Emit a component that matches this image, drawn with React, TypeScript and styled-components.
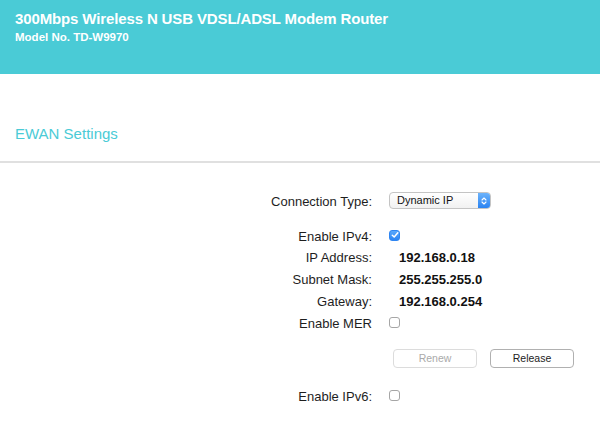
import React from "react";
import styled, { createGlobalStyle } from "styled-components";

const Global = createGlobalStyle`
  html, body { margin: 0; padding: 0; background: #fff; }
  body { font-family: "Liberation Sans", Arial, Helvetica, sans-serif; color: #222; }
`;

const Page = styled.div`
  width: 600px;
  height: 422px;
  overflow: hidden;
  background: #fff;
`;

const Header = styled.header`
  height: 74px;
  box-sizing: border-box;
  padding: 10px 15px 0;
  background: #4acbd6;
  color: #fff;
`;

const Title = styled.div`
  font-size: 15px;
  line-height: 18px;
  font-weight: bold;
  letter-spacing: -0.13px;
`;

const Model = styled.div`
  margin-top: 2px;
  font-size: 11.5px;
  line-height: 14px;
  font-weight: bold;
`;

const SectionHead = styled.div`
  padding: 51px 15px 18px;
  border-bottom: 2px solid #e0e0e0;
  font-size: 15px;
  line-height: 18px;
  color: #4acbd6;
`;

const Form = styled.div`
  margin-top: 28px;
  display: flex;
  flex-direction: column;
`;

const Row = styled.div<{ $mt?: number }>`
  display: grid;
  grid-template-columns: 372px 1fr;
  column-gap: 17px;
  align-items: center;
  height: 21px;
  margin-top: ${(p) => p.$mt ?? 0}px;
`;

const Label = styled.div`
  text-align: right;
  font-size: 13px;
  line-height: 21px;
  color: #1e1e1e;
  white-space: nowrap;
`;

const Value = styled.div`
  padding-left: 10px;
  font-size: 13px;
  line-height: 21px;
  font-weight: bold;
  color: #111;
`;

const Select = styled.div`
  align-self: start;
  margin-top: 1px;
  width: 102px;
  height: 17px;
  box-sizing: border-box;
  display: flex;
  border: 1px solid #c4c4c4;
  border-radius: 4px;
  background: linear-gradient(#ffffff, #f1f1f1);
  overflow: hidden;
`;

const SelectText = styled.span`
  flex: 1;
  padding-left: 7px;
  font-size: 11px;
  line-height: 15px;
  color: #111;
`;

const Stepper = styled.span`
  width: 12px;
  display: flex;
  align-items: center;
  justify-content: center;
  background: linear-gradient(#6cb3fb, #2a83f2);
`;

const Check = styled.span<{ $on?: boolean }>`
  width: 11px;
  height: 11px;
  box-sizing: border-box;
  margin-bottom: 3px;
  border-radius: 3px;
  display: flex;
  align-items: center;
  justify-content: center;
  border: 1px solid ${(p) => (p.$on ? "#2f86f2" : "#a6a6a6")};
  background: ${(p) => (p.$on ? "linear-gradient(#5aa8fb, #2b84f3)" : "#fff")};
`;

const Buttons = styled.div`
  display: flex;
  gap: 13px;
  padding-left: 4px;
`;

const Button = styled.button<{ $disabled?: boolean }>`
  width: 84px;
  height: 19px;
  padding: 0;
  box-sizing: border-box;
  border-radius: 4px;
  font-family: "Liberation Sans", Arial, sans-serif;
  font-size: 10.5px;
  line-height: 17px;
  background: #fff;
  border: 1px solid ${(p) => (p.$disabled ? "#dcdcdc" : "#b0b0b0")};
  color: ${(p) => (p.$disabled ? "#aaaaaa" : "#222")};
`;

const CheckMark = () => (
  <svg width="8" height="8" viewBox="0 0 8 8">
    <path d="M1.3 4.2 L3.2 6 L6.8 1.8" fill="none" stroke="#fff" strokeWidth="1.5" strokeLinecap="round" strokeLinejoin="round" />
  </svg>
);

const Arrows = () => (
  <svg width="6" height="10" viewBox="0 0 6 10">
    <path d="M1 4 L3 2 L5 4 M1 6 L3 8 L5 6" fill="none" stroke="#fff" strokeWidth="1.1" strokeLinecap="round" strokeLinejoin="round" />
  </svg>
);

export default function App() {
  return (
    <Page>
      <Global />
      <Header>
        <Title>300Mbps Wireless N USB VDSL/ADSL Modem Router</Title>
        <Model>Model No. TD-W9970</Model>
      </Header>
      <SectionHead>EWAN Settings</SectionHead>
      <Form>
        <Row>
          <Label>Connection Type:</Label>
          <Select>
            <SelectText>Dynamic IP</SelectText>
            <Stepper>
              <Arrows />
            </Stepper>
          </Select>
        </Row>
        <Row $mt={14}>
          <Label>Enable IPv4:</Label>
          <Check $on>
            <CheckMark />
          </Check>
        </Row>
        <Row>
          <Label>IP Address:</Label>
          <Value>192.168.0.18</Value>
        </Row>
        <Row $mt={1}>
          <Label>Subnet Mask:</Label>
          <Value>255.255.255.0</Value>
        </Row>
        <Row $mt={1}>
          <Label>Gateway:</Label>
          <Value>192.168.0.254</Value>
        </Row>
        <Row $mt={1}>
          <Label>Enable MER</Label>
          <Check />
        </Row>
        <Row $mt={14}>
          <span />
          <Buttons>
            <Button $disabled>Renew</Button>
            <Button>Release</Button>
          </Buttons>
        </Row>
        <Row $mt={17}>
          <Label>Enable IPv6:</Label>
          <Check />
        </Row>
      </Form>
    </Page>
  );
}
